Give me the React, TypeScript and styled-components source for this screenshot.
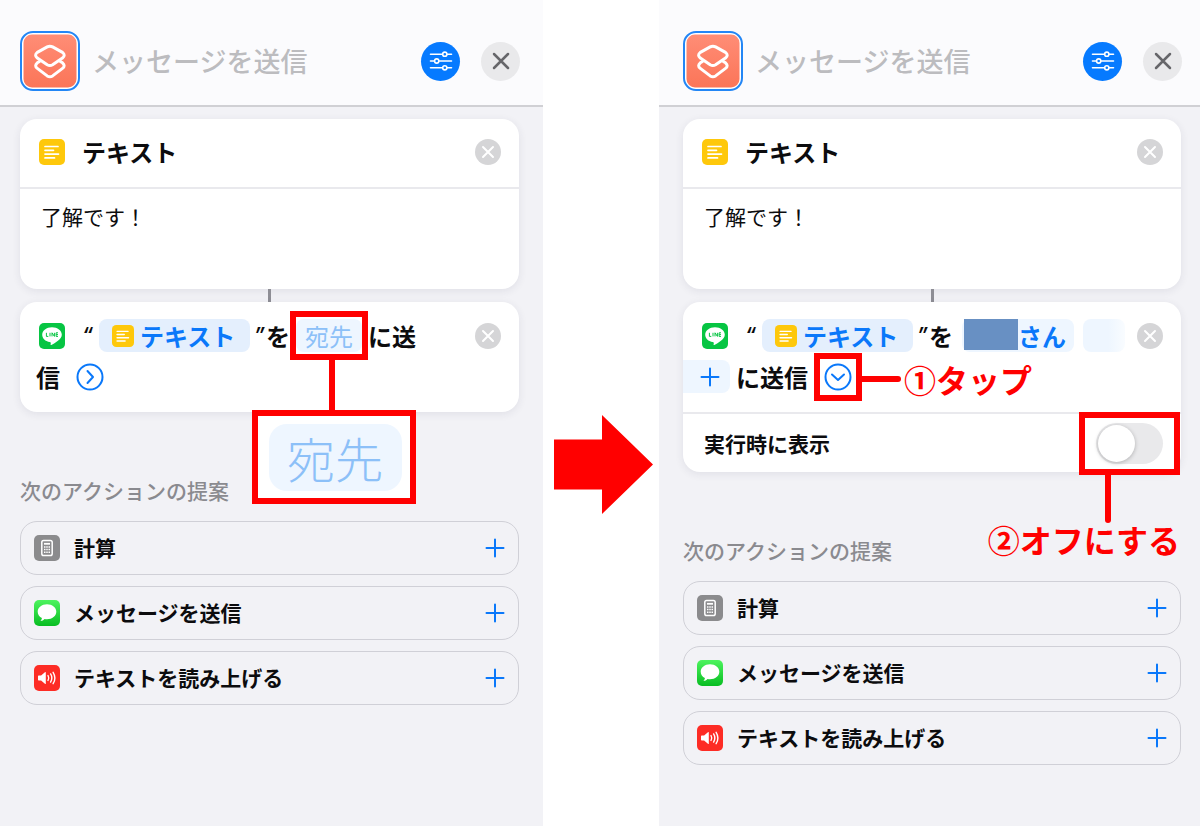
import React, { useId, useState } from "react";
import styled, { createGlobalStyle, css } from "styled-components";

const blue = "#0a78fa";
const red = "#ff0000";

const GlobalStyle = createGlobalStyle`
  *, *::before, *::after { box-sizing: border-box; }
  body {
    margin: 0;
    background: #fff;
    color: #0c0c0e;
    font-family: "Noto Sans CJK JP", "Noto Sans", sans-serif;
  }
  button, input, textarea { font: inherit; color: inherit; }
  button { cursor: pointer; }
  svg { display: block; flex: none; }
`;

const Page = styled.main`
  display: grid;
  grid-template-columns: minmax(0, 543fr) 116px minmax(0, 541fr);
  min-height: 100vh;
`;

const Phone = styled.section<{ $side: "before" | "after" }>`
  --pad-left: ${(p) => (p.$side === "before" ? "20px" : "24px")};
  --pad-right: ${(p) => (p.$side === "before" ? "24px" : "19px")};
  background: #f2f2f6;
`;

const Header = styled.header`
  display: flex;
  align-items: center;
  height: 107px;
  padding: 17px calc(var(--pad-right) - 1px) 0 var(--pad-left);
  background: #fbfbfd;
  border-bottom: 2px solid #d0d0d4;
`;

const AppIconButton = styled.button`
  width: 60px;
  height: 60px;
  padding: 0;
  border: 0;
  background: none;
`;

const NameInput = styled.input`
  flex: 1;
  min-width: 0;
  margin: 0 12px;
  padding: 0;
  border: 0;
  outline: 0;
  background: none;
  font-size: 27px;
  font-weight: 500;
  line-height: 40px;
  &::placeholder { color: #bcbcbf; opacity: 1; }
`;

const RoundButton = styled.button<{ $primary?: boolean }>`
  display: grid;
  place-items: center;
  flex: none;
  width: 39px;
  height: 39px;
  padding: 0;
  border: 0;
  border-radius: 50%;
  color: ${(p) => (p.$primary ? "#fff" : "#66666a")};
  background: ${(p) => (p.$primary ? "#067aff" : "#e9e9eb")};
  & + & { margin-left: 21px; }
`;

const Content = styled.div`
  padding: 12px var(--pad-right) 24px var(--pad-left);
`;

const Card = styled.article`
  background: #fff;
  border-radius: 17px;
  box-shadow: 0 2px 8px rgba(40, 40, 80, 0.09);
`;

const CardHeader = styled.div`
  display: flex;
  align-items: center;
  gap: 17px;
  height: 70px;
  padding: 0 18px 2px 19px;
  border-bottom: 2px solid #e9e9ed;
`;

const CardTitle = styled.h2`
  flex: 1;
  margin: 0;
  font-size: 24px;
  line-height: 36px;
  font-weight: 700;
`;

const ClearButton = styled.button`
  display: grid;
  place-items: center;
  flex: none;
  width: 26px;
  height: 26px;
  margin-left: auto;
  padding: 0;
  border: 0;
  border-radius: 50%;
  color: #fff;
  background: #d5d5d7;
`;

const TextBody = styled.textarea`
  display: block;
  width: 100%;
  height: 100px;
  padding: 11px 21px;
  border: 0;
  outline: 0;
  resize: none;
  background: none;
  font-size: 21px;
  line-height: 32px;
`;

const Connector = styled.div`
  width: 3px;
  height: 13px;
  margin: 0 auto;
  background: #8e8e95;
`;

const Sentence = styled.div`
  display: flex;
  flex-direction: column;
  gap: 8px;
  padding: 17px 0 19px;
  font-size: 24px;
  line-height: 33px;
  font-weight: 700;
`;

const Line = styled.div<{ $start: number }>`
  display: flex;
  align-items: center;
  height: 33px;
  padding: 0 18px 0 ${(p) => p.$start}px;
  white-space: nowrap;
`;

const Quote = styled.span<{ $open?: boolean }>`
  font-family: Inter, sans-serif;
  font-size: 20px;
  font-style: italic;
  font-weight: 600;
  width: 12px;
  margin-left: ${(p) => (p.$open ? 17 : 4)}px;
  margin-right: ${(p) => (p.$open ? 5 : 0)}px;
`;

const chip = css`
  display: flex;
  align-items: center;
  height: 33px;
  border: 0;
  border-radius: 8px;
  color: ${blue};
`;

const VariableChip = styled.button`
  ${chip}
  gap: 6px;
  width: 151px;
  padding: 0 0 0 13px;
  background: #e4effd;
  font-weight: 700;
  line-height: 33px;
`;

const RecipientChip = styled.button`
  ${chip}
  position: relative;
  justify-content: center;
  width: 66px;
  margin: 0 6px;
  padding: 0;
  color: #8cc0f8;
  background: #eef6ff;
  font-weight: 400;
  line-height: 33px;
`;

const ContactChip = styled.span`
  ${chip}
  width: 112px;
  margin-left: 9px;
  background: #eef6ff;
`;

const Redaction = styled.span`
  width: 54px;
  height: 31px;
  margin: 0 0 2px 2px;
  background: #6890c3;
`;

const EmptyChip = styled.span`
  ${chip}
  width: 42px;
  margin-left: 9px;
  background: linear-gradient(90deg, #eef6ff 60%, #f9fcff);
`;

const AddChip = styled.button`
  ${chip}
  justify-content: flex-end;
  width: 47px;
  margin-right: 6px;
  padding: 0 10px 0 0;
  border-radius: 0 8px 8px 0;
  background: #eef6ff;
`;

const DisclosureButton = styled.button`
  position: relative;
  width: 28px;
  height: 28px;
  margin-left: 16px;
  padding: 0;
  border: 0;
  background: none;
  color: ${blue};
`;

const OptionRow = styled.div`
  display: flex;
  align-items: center;
  justify-content: space-between;
  height: 60px;
  padding: 0 18px 0 21px;
  border-top: 2px solid #e9e9ed;
  font-size: 21px;
  line-height: 32px;
  font-weight: 700;
`;

const SwitchWrap = styled.span`
  position: relative;
  display: block;
  width: 67px;
  height: 41px;
`;

const Switch = styled.input`
  appearance: none;
  display: block;
  width: 67px;
  height: 41px;
  margin: 0;
  border-radius: 21px;
  background: #e9e9eb;
  cursor: pointer;
  &::before {
    content: "";
    display: block;
    width: 37px;
    height: 37px;
    margin: 2px;
    border-radius: 50%;
    background: #fff;
    box-shadow: 0 1px 4px rgba(0, 0, 0, 0.25);
  }
  &:checked { background: #34c759; }
  &:checked::before { margin-left: 28px; }
`;

const SuggestionTitle = styled.h3`
  margin: 62px 0 15px;
  font-size: 21px;
  line-height: 32px;
  font-weight: 500;
  color: #8a8a8f;
`;

const SuggestionList = styled.ul`
  display: flex;
  flex-direction: column;
  gap: 11px;
  margin: 0;
  padding: 0;
  list-style: none;
`;

const Suggestion = styled.button`
  display: flex;
  align-items: center;
  gap: 14px;
  width: 100%;
  height: 54px;
  padding: 0 13px;
  border: 1px solid #d0d0d7;
  border-radius: 17px;
  background: none;
  font-size: 21px;
  font-weight: 700;
  line-height: 32px;
  text-align: left;
`;

const SuggestionLabel = styled.span`
  flex: 1;
  padding-bottom: 2px;
`;

const ArrowColumn = styled.div`
  display: flex;
  justify-content: center;
  align-items: flex-start;
  padding: 415px 0 0 5px;
`;

/* Instruction marks that lie over the phone screens */
const Frame = styled.span<{ $y: number; $x: number }>`
  position: absolute;
  inset: ${(p) => `-${p.$y}px -${p.$x}px`};
  border: 6px solid ${red};
  pointer-events: none;
`;

const Magnifier = styled.span`
  position: absolute;
  z-index: 1;
  top: 40px;
  left: -44px;
  display: flex;
  flex-direction: column;
  align-items: center;
  width: 164px;
  pointer-events: none;
`;

const Stem = styled.span`
  width: 6px;
  height: 51px;
  margin-right: 4px;
  background: ${red};
`;

const MagnifierBox = styled.span`
  display: grid;
  place-items: center;
  width: 164px;
  height: 94px;
  padding-left: 2px;
  border: 6px solid ${red};
  background: #fff;
`;

const MagnifiedChip = styled.span`
  width: 133px;
  height: 67px;
  border-radius: 18px;
  background: #eef6ff;
  font-size: 48px;
  font-weight: 300;
  line-height: 67px;
  text-align: center;
`;

const TapNote = styled.span`
  position: absolute;
  z-index: 1;
  left: 38px;
  top: -7px;
  display: flex;
  align-items: center;
  gap: 3px;
  color: ${red};
  font-size: 32px;
  line-height: 46px;
  font-weight: 700;
  white-space: nowrap;
  pointer-events: none;
  &::before {
    content: "";
    width: 39px;
    height: 6px;
    border-radius: 0 3px 3px 0;
    background: ${red};
  }
`;

const OffNote = styled.span`
  position: absolute;
  z-index: 1;
  right: -17px;
  top: 50px;
  display: flex;
  flex-direction: column;
  align-items: flex-end;
  color: ${red};
  font-size: 32px;
  line-height: 32px;
  font-weight: 700;
  white-space: nowrap;
  pointer-events: none;
  &::before {
    content: "";
    width: 6px;
    height: 50px;
    margin-right: 69px;
    border-radius: 0 0 3px 3px;
    background: ${red};
  }
`;

function ShortcutsIcon() {
  const id = useId();
  return (
    <svg width="60" height="60" viewBox="0 0 60 60" aria-hidden="true">
      <defs>
        <linearGradient id={id} x1="0" y1="0" x2="0" y2="1">
          <stop offset="0" stopColor="#ff8d76" />
          <stop offset="1" stopColor="#fb7558" />
        </linearGradient>
      </defs>
      <rect x="1" y="1" width="58" height="58" rx="12" fill="#fff" stroke="#2386f5" strokeWidth="2" />
      <rect x="3.5" y="3.5" width="53" height="53" rx="8.5" fill={`url(#${id})`} />
      <g fill="none" stroke="#fff" strokeWidth="3" strokeLinejoin="round" strokeLinecap="round">
        <path d="M19.500 30.400l-2.200 1.400q-3.300 3 0 5.600l9.900 7.500q2.700 1.700 5.400 0l9.900-7.500q3.300-2.600 0-5.600l-2.200-1.400" />
        <path d="M27.200 15.900q2.700-1.500 5.400 0l9.900 5.500q3.400 2.700 0 5.700l-9.900 6.700q-2.700 1.600-5.400 0l-9.900-6.700q-3.400-3 0-5.700z" />
      </g>
    </svg>
  );
}

const SlidersIcon = () => (
  <svg width="24" height="20" viewBox="0 0 24 20" fill="none" stroke="currentColor" strokeWidth="1.600" strokeLinecap="round" aria-hidden="true">
    <path d="M1.500 3.200h11.800M18.300 3.200h4.200M1.500 10h3.700M10.200 10h12.300M1.500 16.800h11.800M18.300 16.800h4.200" />
    <circle cx="15.800" cy="3.200" r="2.100" />
    <circle cx="7.700" cy="10" r="2.100" />
    <circle cx="15.800" cy="16.800" r="2.100" />
  </svg>
);

const Cross = ({ size, weight }: { size: number; weight: number }) => (
  <svg width={size} height={size} viewBox={`0 0 ${size} ${size}`} stroke="currentColor" strokeWidth={weight} strokeLinecap="round" aria-hidden="true">
    <path d={`M2 2L${size - 2} ${size - 2}M${size - 2} 2L2 ${size - 2}`} />
  </svg>
);

const Plus = () => (
  <svg width="20" height="20" viewBox="0 0 20 20" stroke={blue} strokeWidth="2" strokeLinecap="round" aria-hidden="true">
    <path d="M10 1.500v17M1.500 10h17" />
  </svg>
);

const TextIcon = ({ size }: { size: number }) => (
  <svg width={size} height={size} viewBox="0 0 26 26" aria-hidden="true">
    <rect width="26" height="26" rx="5" fill="#fec80b" />
    <path d="M6 7.500h13M6 11.300h8.500M6 15.100h13.500M6 18.900h9.500" stroke="#fff" strokeWidth="1.700" strokeLinecap="round" />
  </svg>
);

const LineIcon = () => (
  <svg width="26" height="26" viewBox="0 0 26 26" aria-hidden="true">
    <rect width="26" height="26" rx="5" fill="#07c543" />
    <path d="M13 4.200c-5.500 0-9.800 3.300-9.800 7.500 0 3.600 3.100 6.600 7.500 7.300 1.300.2 1.300.9.900 2.500-.1.500.2.700.7.400 3.700-2 10.500-5.500 10.500-10.200 0-4.200-4.300-7.500-9.800-7.500z" fill="#fff" />
    <path d="M7.400 9.800v3.600h1.900M11 9.800v3.600M13 13.400V9.800l2.400 3.600V9.800M19 9.800h-1.900v3.600H19M17.100 11.600H19" fill="none" stroke="#07c543" strokeWidth="1" />
  </svg>
);

const CalculatorIcon = () => (
  <svg width="26" height="26" viewBox="0 0 26 26" aria-hidden="true">
    <rect width="26" height="26" rx="5" fill="#8b8b8d" />
    <rect x="7.800" y="5.500" width="10.400" height="15" rx="1.800" fill="none" stroke="#fff" strokeWidth="1.500" />
    <path d="M10 8.800h6" stroke="#fff" strokeWidth="1.800" />
    <path d="M10 12h6M10 14.600h6M10 17.200h6" stroke="#fff" strokeWidth="1.500" strokeDasharray="1.500 .75" />
  </svg>
);

function MessagesIcon() {
  const id = useId();
  return (
    <svg width="26" height="26" viewBox="0 0 26 26" aria-hidden="true">
      <defs>
        <linearGradient id={id} x1="0" y1="0" x2="0" y2="1">
          <stop offset="0" stopColor="#4df45e" />
          <stop offset="1" stopColor="#08bd22" />
        </linearGradient>
      </defs>
      <rect width="26" height="26" rx="5" fill={`url(#${id})`} />
      <path d="M13 4.300c-5.200 0-9.300 3.300-9.300 7.500 0 2.700 1.700 5 4.200 6.300-.2 1.300-.7 2.200-1.600 3 1.800-.1 3.200-.8 4.300-2 .8.200 1.600.200 2.400.200 5.200 0 9.300-3.300 9.300-7.500S18.200 4.300 13 4.300z" fill="#fff" />
    </svg>
  );
}

const SpeakIcon = () => (
  <svg width="26" height="26" viewBox="0 0 26 26" aria-hidden="true">
    <rect width="26" height="26" rx="5" fill="#fd2c25" />
    <path d="M4 11.200q0-.7.700-.7h2.400l3.800-3.300q.9-.7.900.4v10.800q0 1.100-.9.400l-3.800-3.300H4.700q-.7 0-.7-.7z" fill="#fff" />
    <path d="M14 10.500q1.500 2.500 0 5M16.600 8.900q2.500 4.100 0 8.200M19.100 7.300q3.600 5.700 0 11.400" fill="none" stroke="#fff" strokeWidth="1.400" strokeLinecap="round" />
  </svg>
);

const Chevron = ({ open }: { open?: boolean }) => (
  <svg width="28" height="28" viewBox="0 0 28 28" fill="none" stroke="currentColor" strokeWidth="2" strokeLinecap="round" strokeLinejoin="round" aria-hidden="true">
    <circle cx="14" cy="14" r="12.500" />
    <path d={open ? "M8 11.500l6 5.500 6-5.500" : "M11.500 8l5.500 6-5.500 6"} />
  </svg>
);

const suggestions = [
  { label: "計算", icon: <CalculatorIcon /> },
  { label: "メッセージを送信", icon: <MessagesIcon /> },
  { label: "テキストを読み上げる", icon: <SpeakIcon /> },
];

const Clear = () => (
  <ClearButton type="button" aria-label="削除">
    <Cross size={14} weight={2} />
  </ClearButton>
);

function SentenceStart() {
  return (
    <>
      <LineIcon />
      <Quote $open>“</Quote>
      <VariableChip type="button">
        <TextIcon size={22} />
        テキスト
      </VariableChip>
      <Quote>”</Quote>
      <span>を</span>
    </>
  );
}

function Screen({ side, children }: { side: "before" | "after"; children: React.ReactNode }) {
  return (
    <Phone $side={side}>
      <Header>
        <AppIconButton type="button" aria-label="アイコン">
          <ShortcutsIcon />
        </AppIconButton>
        <NameInput placeholder="メッセージを送信" aria-label="ショートカット名" />
        <RoundButton type="button" $primary aria-label="設定">
          <SlidersIcon />
        </RoundButton>
        <RoundButton type="button" aria-label="閉じる">
          <Cross size={18} weight={2.5} />
        </RoundButton>
      </Header>
      <Content>
        <Card>
          <CardHeader>
            <TextIcon size={26} />
            <CardTitle>テキスト</CardTitle>
            <Clear />
          </CardHeader>
          <TextBody aria-label="テキスト" defaultValue="了解です！" />
        </Card>
        <Connector />
        <Card>{children}</Card>
        <SuggestionTitle>次のアクションの提案</SuggestionTitle>
        <SuggestionList>
          {suggestions.map((s) => (
            <li key={s.label}>
              <Suggestion type="button">
                {s.icon}
                <SuggestionLabel>{s.label}</SuggestionLabel>
                <Plus />
              </Suggestion>
            </li>
          ))}
        </SuggestionList>
      </Content>
    </Phone>
  );
}

export default function App() {
  const [ask, setAsk] = useState(false);
  const switchId = useId();
  return (
    <>
      <GlobalStyle />
      <Page>
        <Screen side="before">
          <Sentence>
            <Line $start={19}>
              <SentenceStart />
              <RecipientChip type="button">
                宛先
                <Frame $y={8} $x={6} />
                <Magnifier>
                  <Stem />
                  <MagnifierBox>
                    <MagnifiedChip>宛先</MagnifiedChip>
                  </MagnifierBox>
                </Magnifier>
              </RecipientChip>
              <span>に送</span>
              <Clear />
            </Line>
            <Line $start={16}>
              <span>信</span>
              <DisclosureButton type="button" aria-label="詳細を表示">
                <Chevron />
              </DisclosureButton>
            </Line>
          </Sentence>
        </Screen>

        <ArrowColumn>
          <svg width="99" height="99" viewBox="0 0 99 99" aria-hidden="true">
            <path d="M0 24.500h48V0l51 49.500L48 99V74.500H0z" fill={red} />
          </svg>
        </ArrowColumn>

        <Screen side="after">
          <Sentence>
            <Line $start={19}>
              <SentenceStart />
              <ContactChip>
                <Redaction />
                さん
              </ContactChip>
              <EmptyChip />
              <Clear />
            </Line>
            <Line $start={0}>
              <AddChip type="button" aria-label="宛先を追加">
                <Plus />
              </AddChip>
              <span>に送信</span>
              <DisclosureButton type="button" aria-label="詳細を隠す">
                <Chevron open />
                <Frame $y={10} $x={10} />
                <TapNote>①タップ</TapNote>
              </DisclosureButton>
            </Line>
          </Sentence>
          <OptionRow>
            <label htmlFor={switchId}>実行時に表示</label>
            <SwitchWrap>
              <Switch
                id={switchId}
                type="checkbox"
                role="switch"
                checked={ask}
                onChange={(e) => setAsk(e.target.checked)}
              />
              <Frame $y={11} $x={17} />
              <OffNote>②オフにする</OffNote>
            </SwitchWrap>
          </OptionRow>
        </Screen>
      </Page>
    </>
  );
}
